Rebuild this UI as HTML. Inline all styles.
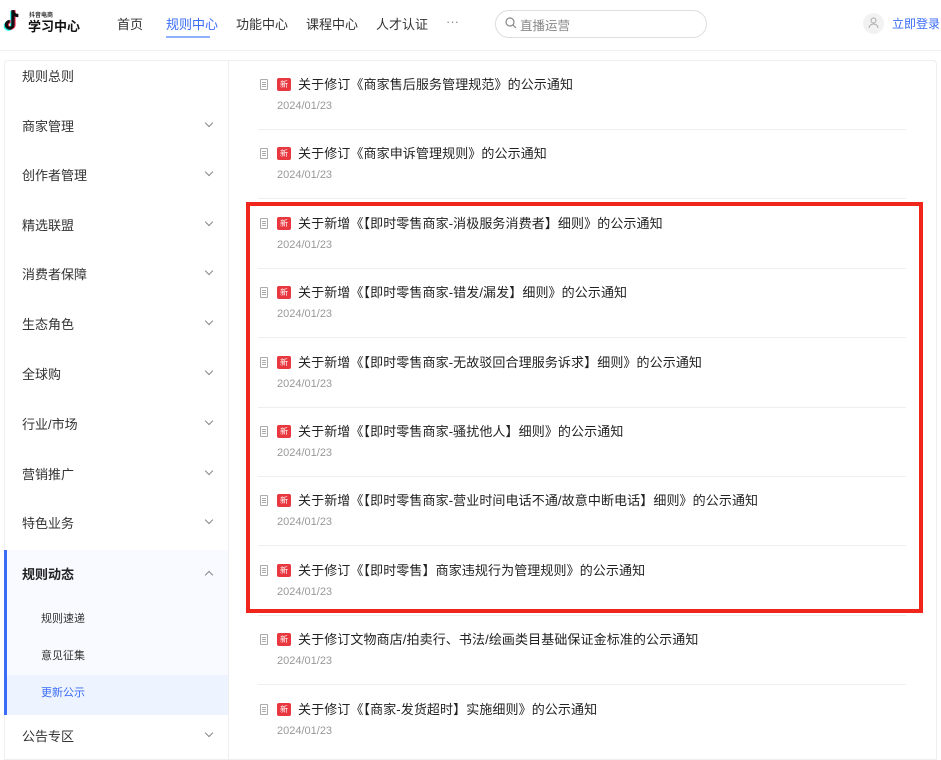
<!DOCTYPE html>
<html><head><meta charset="utf-8"><style>
*{margin:0;padding:0;box-sizing:border-box}
body{width:941px;height:754px;overflow:hidden;background:#fff;font-family:"Liberation Sans","Noto Sans CJK SC",sans-serif;color:#333;position:relative}
.a{position:absolute;white-space:nowrap}
.nav{font-size:13px;color:#333;top:14px}
.side{left:4px;top:60px;width:224px;height:700px;border:1px solid #eee;border-right:none;border-radius:4px 0 0 0}
.si{position:absolute;left:22px;font-size:13px;color:#333}
.chev{position:absolute;left:206px;width:6px;height:6px;border-right:1.3px solid #888;border-bottom:1.3px solid #888;transform:rotate(45deg)}
.main{left:228px;top:60px;width:709px;height:700px;border:1px solid #eee;border-radius:0 4px 0 0}
.t{position:absolute;left:298px;font-size:13px;color:#222;letter-spacing:0.1px}
.d{position:absolute;left:277px;font-size:11px;color:#999}
.doc{position:absolute;left:260px;width:8px;height:11px;border:1px solid #aaa;border-radius:1px}
.doc:before{content:"";position:absolute;left:1px;top:2px;width:4px;height:1px;background:#aaa;box-shadow:0 2px #aaa,0 4px #aaa}
.bd{position:absolute;left:277px;width:14px;height:13px;background:#e8373e;border-radius:2px;color:#fff;font-size:8px;line-height:13px;text-align:center}
.sep{position:absolute;left:258px;width:648px;height:1px;background:#eee}
</style></head><body>
<svg class="a" style="left:3px;top:9px" width="22" height="24" viewBox="0 0 20 22"><path d="M9 1v13.5a3 3 0 1 1-3-3" fill="none" stroke="#25f4ee" stroke-width="3" transform="translate(-1,1)"/><path d="M9 1v13.5a3 3 0 1 1-3-3" fill="none" stroke="#fe2c55" stroke-width="3" transform="translate(1,0)"/><path d="M9 1v13.5a3 3 0 1 1-3-3M9 1c0 3 2 5 5 5" fill="none" stroke="#111" stroke-width="3"/></svg>
<div class="a" style="left:29px;top:10px;font-size:6px;font-weight:bold">抖音电商</div>
<div class="a" style="left:28px;top:16px;font-size:13px;font-weight:bold;color:#111">学习中心</div>
<div class="a nav" style="left:117px">首页</div>
<div class="a nav" style="left:166px;color:#3b6cf6">规则中心</div>
<div class="a" style="left:166px;top:36px;width:44px;height:2px;background:#8fb0fa"></div>
<div class="a nav" style="left:236px">功能中心</div>
<div class="a nav" style="left:306px">课程中心</div>
<div class="a nav" style="left:376px">人才认证</div>
<div class="a nav" style="left:446px;color:#888">···</div>
<div class="a" style="left:495px;top:10px;width:212px;height:28px;border:1px solid #ddd;border-radius:14px"></div>
<svg class="a" style="left:505px;top:17px" width="12" height="12"><circle cx="5" cy="5" r="4" fill="none" stroke="#888" stroke-width="1.2"/><path d="M8 8l3 3" stroke="#888" stroke-width="1.2"/></svg>
<div class="a" style="left:520px;top:15px;font-size:12.5px;color:#888">直播运营</div>
<div class="a" style="left:863px;top:13px;width:21px;height:21px;border-radius:50%;background:#f2f2f2"></div>
<svg class="a" style="left:868px;top:17px" width="11" height="12"><circle cx="5.5" cy="3.5" r="2.5" fill="none" stroke="#aaa"/><path d="M1 11a4.5 4 0 0 1 9 0" fill="none" stroke="#aaa"/></svg>
<div class="a" style="left:892px;top:15px;font-size:12px;color:#3b6cf6">立即登录</div>
<div class="a" style="left:0;top:50px;width:941px;height:1px;background:#f0f0f0"></div>

<div class="a side">
<div style="position:absolute;left:-1px;top:489px;width:224px;height:165px;background:#f8faff"></div>
<div style="position:absolute;left:-1px;top:614px;width:224px;height:40px;background:#eef4ff"></div>
<div style="position:absolute;left:-1px;top:489px;width:3px;height:165px;background:#3b6cf6"></div>
</div>
<div class="si" style="top:66px">规则总则</div>
<div class="si" style="top:116px">商家管理</div><div class="chev" style="top:120px"></div>
<div class="si" style="top:165px">创作者管理</div><div class="chev" style="top:169px"></div>
<div class="si" style="top:215px">精选联盟</div><div class="chev" style="top:219px"></div>
<div class="si" style="top:264px">消费者保障</div><div class="chev" style="top:268px"></div>
<div class="si" style="top:314px">生态角色</div><div class="chev" style="top:318px"></div>
<div class="si" style="top:364px">全球购</div><div class="chev" style="top:368px"></div>
<div class="si" style="top:414px">行业/市场</div><div class="chev" style="top:418px"></div>
<div class="si" style="top:464px">营销推广</div><div class="chev" style="top:468px"></div>
<div class="si" style="top:513px">特色业务</div><div class="chev" style="top:517px"></div>
<div class="si" style="top:564px;font-weight:bold;color:#222">规则动态</div><div class="chev" style="top:572px;transform:rotate(225deg)"></div>
<div class="si" style="top:610px;left:41px;font-size:11px">规则速递</div>
<div class="si" style="top:647px;left:41px;font-size:11px">意见征集</div>
<div class="si" style="top:684px;left:41px;font-size:11px;color:#3b6cf6">更新公示</div>
<div class="si" style="top:726px">公告专区</div><div class="chev" style="top:730px"></div>

<div class="a main"></div>

<div class="doc" style="top:79px"></div><div class="bd" style="top:78px">新</div><div class="t" style="top:74px">关于修订《商家售后服务管理规范》的公示通知</div><div class="d" style="top:100px">2024/01/23</div><div class="sep" style="top:129px"></div>
<div class="doc" style="top:148px"></div><div class="bd" style="top:147px">新</div><div class="t" style="top:143px">关于修订《商家申诉管理规则》的公示通知</div><div class="d" style="top:169px">2024/01/23</div><div class="sep" style="top:198px"></div>
<div class="doc" style="top:218px"></div><div class="bd" style="top:217px">新</div><div class="t" style="top:213px">关于新增《【即时零售商家-消极服务消费者】细则》的公示通知</div><div class="d" style="top:239px">2024/01/23</div><div class="sep" style="top:268px"></div>
<div class="doc" style="top:287px"></div><div class="bd" style="top:286px">新</div><div class="t" style="top:282px">关于新增《【即时零售商家-错发/漏发】细则》的公示通知</div><div class="d" style="top:308px">2024/01/23</div><div class="sep" style="top:337px"></div>
<div class="doc" style="top:357px"></div><div class="bd" style="top:356px">新</div><div class="t" style="top:352px">关于新增《【即时零售商家-无故驳回合理服务诉求】细则》的公示通知</div><div class="d" style="top:378px">2024/01/23</div><div class="sep" style="top:407px"></div>
<div class="doc" style="top:426px"></div><div class="bd" style="top:425px">新</div><div class="t" style="top:421px">关于新增《【即时零售商家-骚扰他人】细则》的公示通知</div><div class="d" style="top:447px">2024/01/23</div><div class="sep" style="top:476px"></div>
<div class="doc" style="top:495px"></div><div class="bd" style="top:494px">新</div><div class="t" style="top:490px">关于新增《【即时零售商家-营业时间电话不通/故意中断电话】细则》的公示通知</div><div class="d" style="top:516px">2024/01/23</div><div class="sep" style="top:545px"></div>
<div class="doc" style="top:565px"></div><div class="bd" style="top:564px">新</div><div class="t" style="top:560px">关于修订《【即时零售】商家违规行为管理规则》的公示通知</div><div class="d" style="top:586px">2024/01/23</div><div class="sep" style="top:615px"></div>
<div class="doc" style="top:634px"></div><div class="bd" style="top:633px">新</div><div class="t" style="top:629px">关于修订文物商店/拍卖行、书法/绘画类目基础保证金标准的公示通知</div><div class="d" style="top:655px">2024/01/23</div><div class="sep" style="top:684px"></div>
<div class="doc" style="top:704px"></div><div class="bd" style="top:703px">新</div><div class="t" style="top:699px">关于修订《【商家-发货超时】实施细则》的公示通知</div><div class="d" style="top:725px">2024/01/23</div>

<div class="a" style="left:246px;top:202px;width:677px;height:411px;border:4px solid #f0261c"></div>
</body></html>
